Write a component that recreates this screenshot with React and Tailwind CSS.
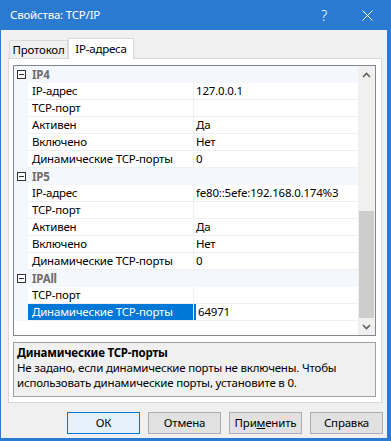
import React from 'react';

const groups = [
  {
    name: 'IP4',
    rows: [
      ['IP-адрес', '127.0.0.1'],
      ['TCP-порт', ''],
      ['Активен', 'Да'],
      ['Включено', 'Нет'],
      ['Динамические TCP-порты', '0'],
    ],
  },
  {
    name: 'IP5',
    rows: [
      ['IP-адрес', 'fe80::5efe:192.168.0.174%3'],
      ['TCP-порт', ''],
      ['Активен', 'Да'],
      ['Включено', 'Нет'],
      ['Динамические TCP-порты', '0'],
    ],
  },
  {
    name: 'IPAll',
    rows: [
      ['TCP-порт', ''],
      ['Динамические TCP-порты', '64971', true],
    ],
  },
];

function MinusBox() {
  return (
    <div className="w-[9px] h-[9px] border border-[#333] bg-white flex items-center justify-center">
      <div className="w-[5px] h-px bg-[#333]" />
    </div>
  );
}

function Chevron({ down }) {
  return (
    <svg width="9" height="6" viewBox="0 0 9 6" className={down ? 'rotate-180' : ''}>
      <path d="M1 5 L4.5 1.5 L8 5" fill="none" stroke="#606060" strokeWidth="1.6" />
    </svg>
  );
}

function Button({ children, primary }) {
  return (
    <button
      className={`w-[73px] h-[22px] text-[11.5px] tracking-[-0.2px] text-black border ${
        primary ? 'bg-[#e5f1fb] border-[#0078d7]' : 'bg-[#e1e1e1] border-[#adadad]'
      }`}
    >
      {children}
    </button>
  );
}

export default function App() {
  return (
    <div className="w-[391px] h-[441px] flex flex-col bg-[#2b7ad1] font-['Noto_Sans',sans-serif] text-[11.5px] tracking-[-0.2px] text-black overflow-hidden">
      {/* Title bar */}
      <div className="h-[30px] flex items-center pl-[10px] text-white">
        <span className="flex-1">Свойства: TCP/IP</span>
        <span className="text-[14px] font-light mr-[35px]">?</span>
        <svg width="11" height="11" viewBox="0 0 11 11" className="mr-[18px]">
          <path d="M0.5 0.5 L10.5 10.5 M10.5 0.5 L0.5 10.5" stroke="white" strokeWidth="1" />
        </svg>
      </div>

      {/* Dialog body */}
      <div className="flex-1 ml-px mr-[4px] mb-[3px] bg-[#f0f0f0] pt-[8px] flex flex-col">
        {/* Tabs */}
        <div className="flex items-end h-[20px] pl-[8px]">
          <div className="w-[59px] h-[18px] border border-b-0 border-[#d9d9d9] bg-[#f0f0f0] flex items-center justify-center leading-none">
            Протокол
          </div>
          <div className="relative z-10 -mb-px w-[66px] h-[21px] border border-b-0 border-[#d9d9d9] bg-white flex items-center justify-center leading-none pb-[1px]">
            IP-адреса
          </div>
        </div>

        {/* Tab panel */}
        <div className="ml-[7px] w-[374px] h-[345px] border border-[#d9d9d9] bg-white pt-[6px] pl-[4px] flex flex-col">
          {/* Property grid */}
          <div className="w-[363px] h-[271px] border border-[#828790] flex bg-white">
            <div className="w-[344px] flex flex-col">
              {groups.map((g) => (
                <React.Fragment key={g.name}>
                  <div className="h-[17px] flex items-center bg-[#f4f7fc]">
                    <div className="w-[14px] flex justify-center pl-[1px]">
                      <MinusBox />
                    </div>
                    <span className="pl-[4px] font-bold text-[#6d6d6d] leading-[16px]">{g.name}</span>
                  </div>
                  {g.rows.map(([k, v, sel]) => (
                    <div key={g.name + k} className="h-[17px] flex">
                      <div className="w-[14px] bg-[#f4f7fc]" />
                      <div
                        className={`w-[165px] pl-[4px] leading-[16px] border-b border-[#f0f0f0] whitespace-nowrap overflow-hidden ${
                          sel ? 'bg-[#0078d7] text-white' : ''
                        }`}
                      >
                        {k}
                      </div>
                      <div className="w-px bg-[#f0f0f0]" />
                      <div className="flex-1 flex border-b border-[#f0f0f0]">
                        {sel && <div className="w-[2px] bg-[#0078d7]" />}
                        <span className="pl-[2px] leading-[16px] whitespace-nowrap">{v}</span>
                      </div>
                    </div>
                  ))}
                </React.Fragment>
              ))}
            </div>
            {/* Scrollbar */}
            <div className="w-[17px] bg-[#f0f0f0] flex flex-col">
              <div className="h-[17px] flex items-center justify-center">
                <Chevron />
              </div>
              <div className="flex-1 flex flex-col px-px">
                <div className="h-[128px]" />
                <div className="h-[107px] bg-[#cdcdcd]" />
              </div>
              <div className="h-[17px] flex items-center justify-center">
                <Chevron down />
              </div>
            </div>
          </div>

          {/* Description */}
          <div className="mt-[6px] w-[363px] h-[55px] border border-[#a0a0a0] bg-[#f0f0f0] pl-[3px] pt-[2px]">
            <div className="font-bold leading-[15px]">Динамические TCP-порты</div>
            <div className="leading-[15px]">
              Не задано, если динамические порты не включены. Чтобы использовать динамические порты, установите в 0.
            </div>
          </div>
        </div>

        {/* Buttons */}
        <div className="mt-[9px] flex justify-end gap-[8px] pr-[4px]">
          <Button primary>ОК</Button>
          <Button>Отмена</Button>
          <Button>
            При<span className="underline">м</span>енить
          </Button>
          <Button>Справка</Button>
        </div>
      </div>
    </div>
  );
}
